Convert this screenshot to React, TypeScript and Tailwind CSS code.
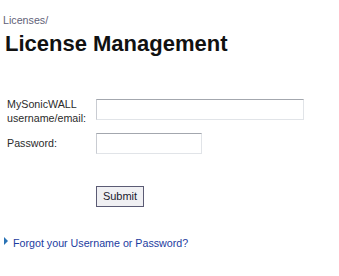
const FONT = "font-['Liberation_Sans',Arial,sans-serif]";

function TextInput({ width }: { width: string }) {
  return (
    <input
      type="text"
      className={[
        'block h-[21px] border border-t-[#a3a7ae] border-l-[#c9ccd2] border-r-[#e1e4e8] border-b-[#e1e4e8] bg-white px-1 text-[11px] outline-none',
        width,
      ].join(' ')}
    />
  );
}

export default function App() {
  return (
    <div className={`h-[276px] w-[339px] overflow-hidden bg-white ${FONT}`}>
      <div className="pl-[3px] pt-[14px] text-[10.7px] leading-[13px] text-[#5f5f78]">Licenses/</div>
      <h1 className="mt-[4px] pl-[5px] text-[22px] font-bold leading-[26px] text-[#111111]">
        License Management
      </h1>

      <form className="mt-[40px] pl-[7px] text-[10.7px] leading-[14px] text-[#2b2b2b]">
        <div className="flex items-start">
          <label className="w-[89px]">
            MySonicWALL
            <br />
            username/email:
          </label>
          <div className="pt-[2px]">
            <TextInput width="w-[208px]" />
          </div>
        </div>

        <div className="mt-[8px] flex items-start">
          <label className="w-[89px] pt-[3px]">Password:</label>
          <TextInput width="w-[106px]" />
        </div>

        <div className="mt-[32px] pl-[89px]">
          <button
            type="button"
            className="h-[21px] w-[48px] border border-[#5b5b74] bg-[#f0f0f3] text-[11px] leading-[19px] text-[#1a1a2e]"
          >
            Submit
          </button>
        </div>
      </form>

      <div className="mt-[29px] flex items-start pl-[4px]">
        <span className="mt-[1px] h-0 w-0 border-y-[4px] border-l-[4px] border-y-transparent border-l-[#2a73b5]" />
        <a href="#" className="ml-[5px] text-[10.7px] leading-[14px] text-[#1c3ca0]">
          Forgot your Username or Password?
        </a>
      </div>
    </div>
  );
}
